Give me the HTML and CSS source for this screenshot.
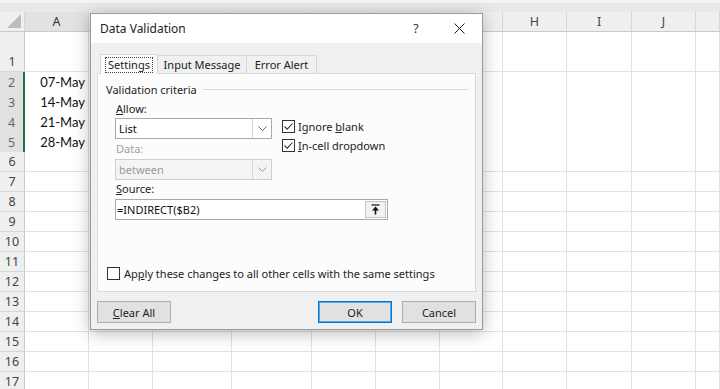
FILE: index.html
```html
<!DOCTYPE html>
<html>
<head>
<meta charset="utf-8">
<link rel="stylesheet" href="styles.css">
</head>
<body>
<div class="sheet">
  <div class="strip"></div>
  <div class="row head">
    <span class="corner"><i class="tri"></i></span>
    <span class="ch sel">A</span><span class="ch"></span><span class="ch"></span><span class="ch"></span><span class="ch"></span><span class="ch"></span><span class="ch"></span><span class="ch">H</span><span class="ch">I</span><span class="ch">J</span><span class="ch"></span>
  </div>
  <div class="row tall"><span class="rh">1</span><span></span><span></span><span></span><span></span><span></span><span></span><span></span><span></span><span></span><span></span><span></span></div>
  <div class="row"><span class="rh sel">2</span><span class="val">07-May</span><span></span><span></span><span></span><span></span><span></span><span></span><span></span><span></span><span></span><span></span></div>
  <div class="row"><span class="rh sel">3</span><span class="val">14-May</span><span></span><span></span><span></span><span></span><span></span><span></span><span></span><span></span><span></span><span></span></div>
  <div class="row"><span class="rh sel">4</span><span class="val">21-May</span><span></span><span></span><span></span><span></span><span></span><span></span><span></span><span></span><span></span><span></span></div>
  <div class="row"><span class="rh sel">5</span><span class="val">28-May</span><span></span><span></span><span></span><span></span><span></span><span></span><span></span><span></span><span></span><span></span></div>
  <div class="row"><span class="rh">6</span><span></span><span></span><span></span><span></span><span></span><span></span><span></span><span></span><span></span><span></span><span></span></div>
  <div class="row"><span class="rh">7</span><span></span><span></span><span></span><span></span><span></span><span></span><span></span><span></span><span></span><span></span><span></span></div>
  <div class="row"><span class="rh">8</span><span></span><span></span><span></span><span></span><span></span><span></span><span></span><span></span><span></span><span></span><span></span></div>
  <div class="row"><span class="rh">9</span><span></span><span></span><span></span><span></span><span></span><span></span><span></span><span></span><span></span><span></span><span></span></div>
  <div class="row"><span class="rh">10</span><span></span><span></span><span></span><span></span><span></span><span></span><span></span><span></span><span></span><span></span><span></span></div>
  <div class="row"><span class="rh">11</span><span></span><span></span><span></span><span></span><span></span><span></span><span></span><span></span><span></span><span></span><span></span></div>
  <div class="row"><span class="rh">12</span><span></span><span></span><span></span><span></span><span></span><span></span><span></span><span></span><span></span><span></span><span></span></div>
  <div class="row"><span class="rh">13</span><span></span><span></span><span></span><span></span><span></span><span></span><span></span><span></span><span></span><span></span><span></span></div>
  <div class="row"><span class="rh">14</span><span></span><span></span><span></span><span></span><span></span><span></span><span></span><span></span><span></span><span></span><span></span></div>
  <div class="row"><span class="rh">15</span><span></span><span></span><span></span><span></span><span></span><span></span><span></span><span></span><span></span><span></span><span></span></div>
  <div class="row"><span class="rh">16</span><span></span><span></span><span></span><span></span><span></span><span></span><span></span><span></span><span></span><span></span><span></span></div>
  <div class="row"><span class="rh">17</span><span></span><span></span><span></span><span></span><span></span><span></span><span></span><span></span><span></span><span></span><span></span></div>
</div>

<div class="dialog">
  <div class="titlebar">
    <span class="title">Data Validation</span>
    <span class="help">?</span>
    <span class="close"><svg width="11" height="11" viewBox="0 0 11 11"><path d="M0.5 0.5 L10.5 10.5 M10.5 0.5 L0.5 10.5" stroke="#222" stroke-width="1" fill="none"/></svg></span>
  </div>
  <div class="body">
    <div class="tabs">
      <div class="tab active"><span class="focus">Settings</span></div>
      <div class="tab">Input Message</div>
      <div class="tab">Error Alert</div>
    </div>
    <div class="panel">
      <div class="group"><span>Validation criteria</span><span class="rule"></span></div>
      <div class="criteria">
        <div class="left">
          <div class="lbl"><u>A</u>llow:</div>
          <div class="select"><span class="stext">List</span><span class="arrow"><svg width="9" height="5" viewBox="0 0 9 5"><path d="M0.5 0.5 L4.5 4.5 L8.5 0.5" stroke="#6a6a6a" fill="none"/></svg></span></div>
          <div class="lbl dis">Data:</div>
          <div class="select disabled"><span class="stext">between</span><span class="arrow"><svg width="9" height="5" viewBox="0 0 9 5"><path d="M0.5 0.5 L4.5 4.5 L8.5 0.5" stroke="#9a9a9a" fill="none"/></svg></span></div>
        </div>
        <div class="checks">
          <div class="check"><span class="box"><svg width="11" height="11" viewBox="0 0 11 11"><path d="M1.5 5.5 L4.2 8.2 L9.5 2.5" stroke="#333" stroke-width="1.1" fill="none"/></svg></span><span>Ignore <u>b</u>lank</span></div>
          <div class="check"><span class="box"><svg width="11" height="11" viewBox="0 0 11 11"><path d="M1.5 5.5 L4.2 8.2 L9.5 2.5" stroke="#333" stroke-width="1.1" fill="none"/></svg></span><span><u>I</u>n-cell dropdown</span></div>
        </div>
      </div>
      <div class="lbl src"><u>S</u>ource:</div>
      <div class="source"><span class="stext">=INDIRECT($B2)</span><span class="refbtn"><svg width="9" height="11" viewBox="0 0 9 11"><path d="M0.5 1 H8.5" stroke="#111" stroke-width="1.2"/><path d="M4.5 2.5 L8 6.5 H1 Z" fill="#111"/><path d="M4.5 6 V10.5" stroke="#111" stroke-width="1.6"/></svg></span></div>
      <div class="check apply"><span class="box"></span><span>Ap<u>p</u>ly these changes to all other cells with the same settings</span></div>
    </div>
    <div class="buttons">
      <button class="btn"><u>C</u>lear All</button>
      <span class="spacer"></span>
      <button class="btn ok">OK</button>
      <button class="btn">Cancel</button>
    </div>
  </div>
</div>
</body>
</html>
```

FILE: styles.css
```css
html, body {
  margin: 0;
  padding: 0;
  background: #ffffff;
  overflow: hidden;
}

.sheet {
  width: 720px;
  height: 389px;
  overflow: hidden;
  font-family: "Noto Sans", sans-serif;
}

.strip {
  height: 12px;
  box-sizing: border-box;
  background: #e8e8e8;
  border-top: 3px solid #f4f4f4;
}

.row {
  display: grid;
  grid-template-columns: 25px 64px 64px 79px 80px 64px 64px 63px 64px 65px 64px 1fr;
  height: 20px;
}

.row > span {
  box-sizing: border-box;
  border-right: 1px solid #e1e1e1;
  border-bottom: 1px solid #e1e1e1;
  background: #ffffff;
}

.row.tall {
  height: 40px;
}

.row.head > span {
  background: #efefef;
  border-right: 1px solid #d6d6d6;
  border-bottom: 1px solid #c9c9c9;
  display: flex;
  align-items: center;
  justify-content: center;
  font-size: 12.5px;
  color: #444;
}

.row.head > span.sel {
  background: #e2e2e2;
  color: #333;
}

.corner {
  position: relative;
}

.tri {
  position: absolute;
  right: 3px;
  bottom: 3px;
  width: 0;
  height: 0;
  border-left: 14px solid transparent;
  border-bottom: 14px solid #bdbdbd;
}

.row > span.rh {
  background: #efefef;
  border-right: 1px solid #c9c9c9;
  border-bottom: 1px solid #d6d6d6;
  font-size: 12.5px;
  color: #444;
  display: flex;
  align-items: center;
  justify-content: center;
}

.row.tall > span.rh {
  align-items: flex-end;
  padding-bottom: 1px;
}

.row > span.rh.sel {
  background: #e1e1e1;
  color: #666;
  border-right: 2px solid #217346;
}

.row > span.val {
  font-family: "Lato", sans-serif;
  font-size: 13px;
  color: #111;
  text-align: right;
  padding-right: 3px;
  line-height: 20px;
}

/* dialog */
.dialog {
  position: absolute;
  left: 90px;
  top: 13px;
  width: 393px;
  height: 317px;
  box-sizing: border-box;
  border: 1px solid #9a9a9a;
  background: #f0f0f0;
  box-shadow: 0 3px 16px rgba(0, 0, 0, 0.28);
  font-family: "Noto Sans", sans-serif;
  font-size: 11px;
  color: #111;
  display: flex;
  flex-direction: column;
}

.titlebar {
  height: 29px;
  background: #ffffff;
  display: flex;
  align-items: center;
  padding-left: 9px;
  flex: none;
}

.title {
  font-size: 12px;
  color: #222;
  flex: 1;
}

.help {
  font-size: 12.5px;
  color: #333;
  width: 14px;
  text-align: center;
  margin-right: 31px;
}

.close {
  display: flex;
  margin-right: 17px;
}

.body {
  flex: 1;
  padding: 11px 6px 0 6px;
  display: flex;
  flex-direction: column;
}

.tabs {
  display: flex;
  height: 19px;
  align-items: flex-end;
  padding-left: 3px;
  position: relative;
  z-index: 1;
}

.tab {
  height: 18px;
  box-sizing: border-box;
  border: 1px solid #d9d9d9;
  border-bottom: none;
  border-left: none;
  background: #f0f0f0;
  display: flex;
  align-items: center;
  justify-content: center;
  white-space: nowrap;
  color: #222;
}

.tab.active {
  height: 20px;
  margin-bottom: -1px;
  border-left: 1px solid #d9d9d9;
  background: #fcfcfc;
  width: 58px;
}

.focus {
  border: 1px dotted #444;
  padding: 0 2px;
  line-height: 14px;
}

.tab:nth-child(2) {
  width: 89px;
}

.tab:nth-child(3) {
  width: 70px;
}

.panel {
  height: 219px;
  box-sizing: border-box;
  border: 1px solid #d9d9d9;
  background: #fcfcfc;
  padding: 7px 0 0 8px;
  display: flex;
  flex-direction: column;
}

.group {
  display: flex;
  align-items: center;
  height: 16px;
  color: #222;
}

.rule {
  flex: 1;
  margin: 0 7px 0 6px;
  border-top: 1px solid #dcdcdc;
}

.criteria {
  display: flex;
  margin-left: 9px;
  margin-top: 4px;
}

.left {
  width: 157px;
  display: flex;
  flex-direction: column;
}

.lbl {
  height: 16px;
  line-height: 16px;
  padding-left: 1px;
  color: #222;
}

.lbl.dis {
  color: #a0a0a0;
  margin-top: 2px;
}

.select {
  margin-top: 1px;
  height: 21px;
  box-sizing: border-box;
  border: 1px solid #a9a9a9;
  background: #ffffff;
  display: flex;
  align-items: center;
}

.select.disabled {
  margin-top: 2px;
  border-color: #cfcfcf;
  background: #f4f4f4;
  color: #9b9b9b;
}

.stext {
  flex: 1;
  padding-left: 3px;
}

.arrow {
  width: 19px;
  height: 100%;
  border-left: 1px solid #d4d4d4;
  display: flex;
  align-items: center;
  justify-content: center;
  box-sizing: border-box;
}

.checks {
  margin-left: 10px;
  padding-top: 17px;
  display: flex;
  flex-direction: column;
  gap: 3px;
}

.check {
  display: flex;
  align-items: center;
  height: 16px;
  color: #222;
}

.box {
  width: 13px;
  height: 13px;
  box-sizing: border-box;
  border: 1px solid #333;
  background: #ffffff;
  display: flex;
  align-items: center;
  justify-content: center;
  margin-right: 3px;
  flex: none;
}

.lbl.src {
  margin-left: 9px;
  margin-top: 1px;
}

.source {
  margin-left: 9px;
  margin-top: 2px;
  width: 273px;
  height: 21px;
  box-sizing: border-box;
  border: 1px solid #a9a9a9;
  background: #ffffff;
  display: flex;
  align-items: center;
}

.source .stext {
  padding-left: 1px;
}

.refbtn {
  width: 21px;
  height: 17px;
  margin-right: 1px;
  box-sizing: border-box;
  border: 1px solid #c4c4c4;
  background: #f2f2f2;
  display: flex;
  align-items: center;
  justify-content: center;
}

.check.apply {
  margin-top: 45px;
  margin-left: 1px;
}

.check.apply .box {
  margin-right: 4px;
}

.buttons {
  display: flex;
  margin-top: 9px;
  height: 22px;
}

.spacer {
  flex: 1;
}

.btn {
  font-family: "Noto Sans", sans-serif;
  font-size: 11px;
  color: #222;
  width: 74px;
  height: 22px;
  box-sizing: border-box;
  border: 1px solid #adadad;
  background: #e1e1e1;
  padding: 0;
  margin: 0;
}

.btn.ok {
  border: 1px solid #0078d7;
  box-shadow: inset 0 0 0 1px #5aa5e6;
  margin-right: 10px;
}
```
